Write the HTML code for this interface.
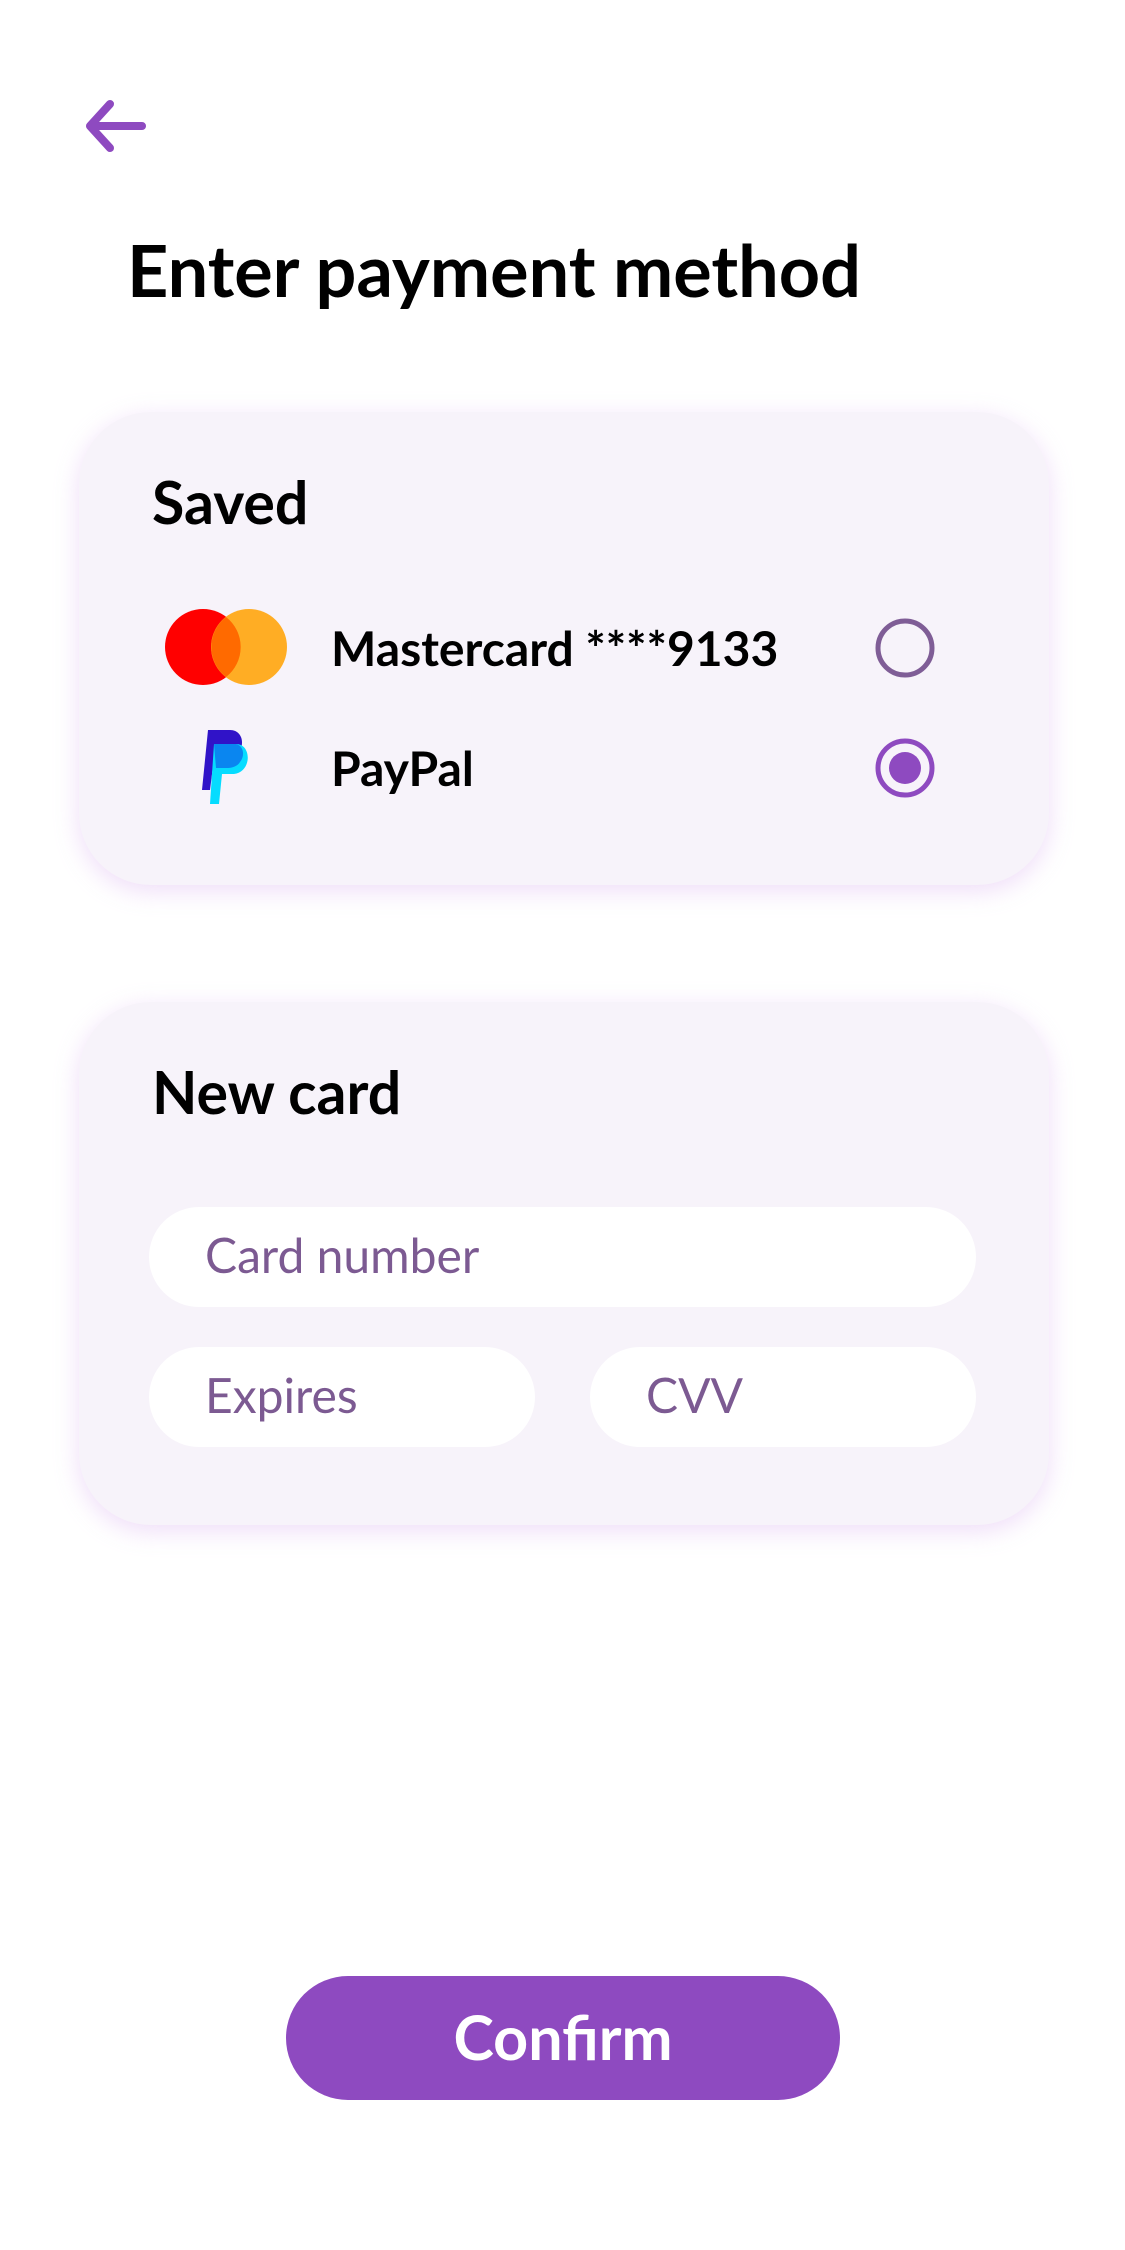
<!DOCTYPE html>
<html><head><meta charset="utf-8"><style>
*{margin:0;padding:0;box-sizing:border-box}
body{width:1125px;height:2250px;background:#fff;font-family:"Lato","Liberation Sans",sans-serif;position:relative;overflow:hidden;color:#000}
.abs{position:absolute}
.card{position:absolute;left:79px;width:970px;background:#f7f3fa;border-radius:72px;box-shadow:0 6px 24px rgba(220,180,240,.45)}
.h{position:absolute;font-weight:bold;font-size:59px;line-height:1}
.row{position:absolute;font-weight:bold;font-size:48px;line-height:1}
.inp{position:absolute;background:#fff;border-radius:50px;height:100px;color:#7c5a92;font-size:48px;line-height:98px;padding-left:56px}
</style></head><body>
<svg class="abs" style="left:80px;top:98px" width="70" height="56" viewBox="0 0 70 56"><path d="M30 6 L10 28 L30 50 M10 28 H62" fill="none" stroke="#8e4ac0" stroke-width="8" stroke-linecap="round" stroke-linejoin="round"/></svg>
<div class="abs" style="left:127px;top:234px;font-size:72px;font-weight:bold;line-height:1">Enter payment method</div>

<div class="card" style="top:412px;height:473px"></div>
<div class="h" style="left:152px;top:472px">Saved</div>
<svg class="abs" style="left:165px;top:609px" width="122" height="76"><circle cx="38" cy="38" r="38" fill="#ff0000"/><circle cx="84" cy="38" r="38" fill="#ffad24"/><path d="M61 8 A38 38 0 0 1 61 68 A38 38 0 0 1 61 8Z" fill="#ff6a00"/></svg>
<div class="row" style="left:331px;top:625px">Mastercard ****9133</div>
<svg class="abs" style="left:875px;top:618px" width="60" height="60"><circle cx="30" cy="30" r="27" fill="none" stroke="#7f5d96" stroke-width="5"/></svg>
<svg class="abs" style="left:200px;top:730px" width="52" height="74" viewBox="0 0 52 74"><path d="M8 0 H30 C46 0 46 24 30 28 H14 L10 60 H2 Z" fill="#3013c8"/><path d="M14 14 H36 C52 14 52 42 34 44 H22 L19 74 H10 Z" fill="#06dcff"/><path d="M14 14 H36 C44 16 45 26 40 32 C38 36 32 38 28 38 H16 Z" fill="#0a86f0"/></svg>
<div class="row" style="left:331px;top:745px">PayPal</div>
<svg class="abs" style="left:875px;top:738px" width="60" height="60"><circle cx="30" cy="30" r="27" fill="none" stroke="#8e4ac0" stroke-width="5"/><circle cx="30" cy="30" r="16" fill="#8e4ac0"/></svg>

<div class="card" style="top:1002px;height:523px"></div>
<div class="h" style="left:152px;top:1062px">New card</div>
<div class="inp" style="left:149px;top:1207px;width:827px">Card number</div>
<div class="inp" style="left:149px;top:1347px;width:386px">Expires</div>
<div class="inp" style="left:590px;top:1347px;width:386px">CVV</div>

<div class="abs" style="left:286px;top:1976px;width:554px;height:124px;border-radius:62px;background:#8e4ac0;color:#fff;font-weight:bold;font-size:61px;text-align:center;line-height:122px">Confirm</div>
</body></html>
